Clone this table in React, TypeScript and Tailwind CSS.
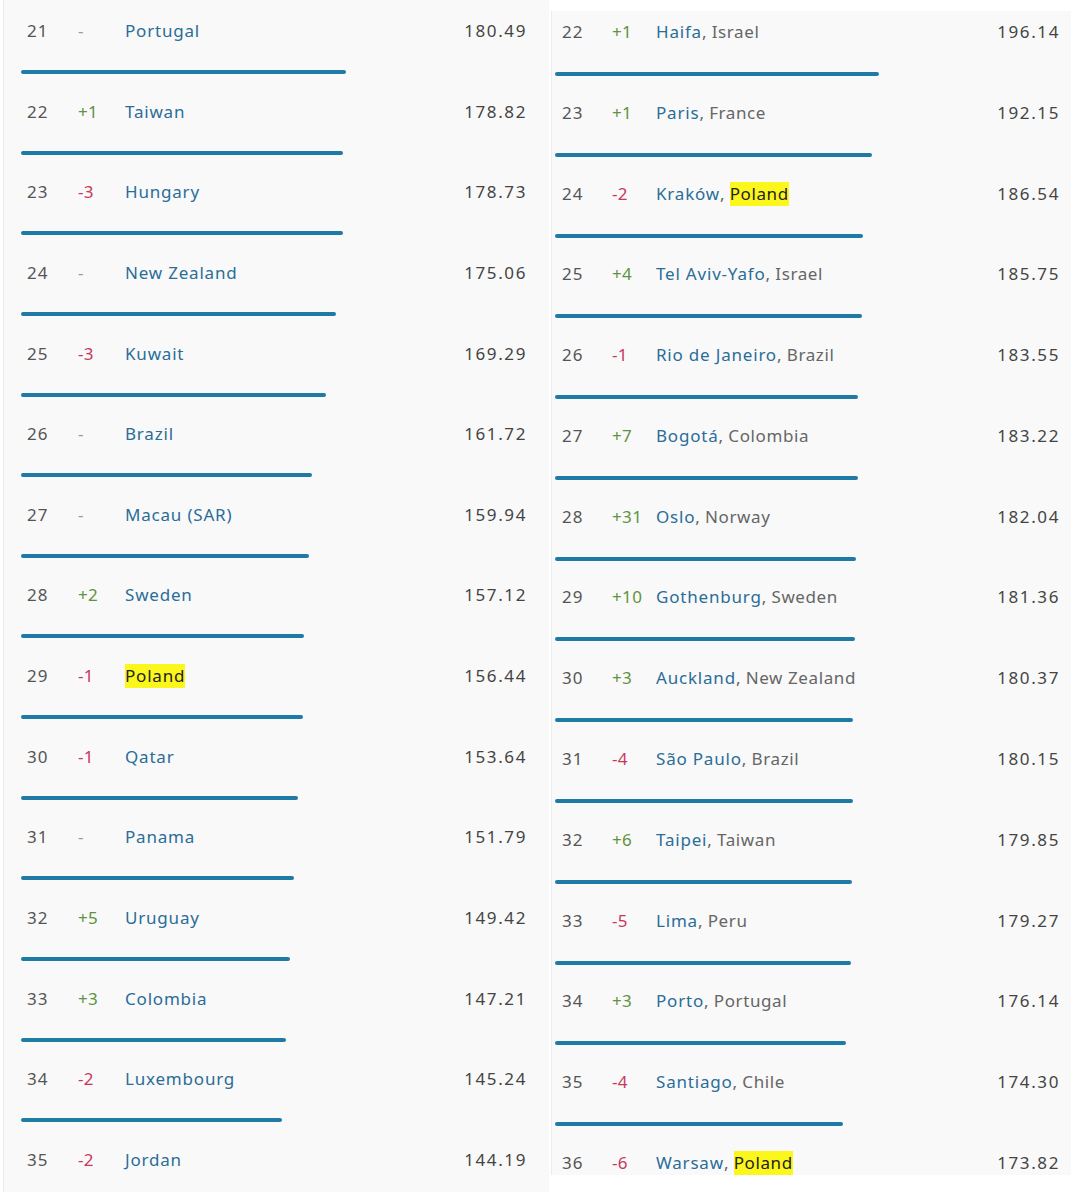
import React from "react";

type Row = { rank: number; change: string; name: string; country?: string; value: string; hl?: boolean; hlName?: boolean };

const left: Row[] = [
  { rank: 21, change: "-", name: "Portugal", value: "180.49" },
  { rank: 22, change: "+1", name: "Taiwan", value: "178.82" },
  { rank: 23, change: "-3", name: "Hungary", value: "178.73" },
  { rank: 24, change: "-", name: "New Zealand", value: "175.06" },
  { rank: 25, change: "-3", name: "Kuwait", value: "169.29" },
  { rank: 26, change: "-", name: "Brazil", value: "161.72" },
  { rank: 27, change: "-", name: "Macau (SAR)", value: "159.94" },
  { rank: 28, change: "+2", name: "Sweden", value: "157.12" },
  { rank: 29, change: "-1", name: "Poland", value: "156.44", hlName: true },
  { rank: 30, change: "-1", name: "Qatar", value: "153.64" },
  { rank: 31, change: "-", name: "Panama", value: "151.79" },
  { rank: 32, change: "+5", name: "Uruguay", value: "149.42" },
  { rank: 33, change: "+3", name: "Colombia", value: "147.21" },
  { rank: 34, change: "-2", name: "Luxembourg", value: "145.24" },
  { rank: 35, change: "-2", name: "Jordan", value: "144.19" },
];

const right: Row[] = [
  { rank: 22, change: "+1", name: "Haifa", country: "Israel", value: "196.14" },
  { rank: 23, change: "+1", name: "Paris", country: "France", value: "192.15" },
  { rank: 24, change: "-2", name: "Kraków", country: "Poland", value: "186.54", hl: true },
  { rank: 25, change: "+4", name: "Tel Aviv-Yafo", country: "Israel", value: "185.75" },
  { rank: 26, change: "-1", name: "Rio de Janeiro", country: "Brazil", value: "183.55" },
  { rank: 27, change: "+7", name: "Bogotá", country: "Colombia", value: "183.22" },
  { rank: 28, change: "+31", name: "Oslo", country: "Norway", value: "182.04" },
  { rank: 29, change: "+10", name: "Gothenburg", country: "Sweden", value: "181.36" },
  { rank: 30, change: "+3", name: "Auckland", country: "New Zealand", value: "180.37" },
  { rank: 31, change: "-4", name: "São Paulo", country: "Brazil", value: "180.15" },
  { rank: 32, change: "+6", name: "Taipei", country: "Taiwan", value: "179.85" },
  { rank: 33, change: "-5", name: "Lima", country: "Peru", value: "179.27" },
  { rank: 34, change: "+3", name: "Porto", country: "Portugal", value: "176.14" },
  { rank: 35, change: "-4", name: "Santiago", country: "Chile", value: "174.30" },
  { rank: 36, change: "-6", name: "Warsaw", country: "Poland", value: "173.82", hl: true },
];

function changeClass(c: string) {
  if (c.startsWith("+")) return "text-[#5e9440]";
  if (c === "-") return "text-[#9a9a9a]";
  return "text-[#c8385c]";
}

const font = { fontFamily: "'Noto Sans', 'Open Sans', sans-serif" };

function LeftRow({ r }: { r: Row }) {
  const w = parseFloat(r.value) * 1.8;
  return (
    <div className="flex h-[80.64px] flex-col pt-[19px]">
      <div className="flex h-[24px] items-center pr-[22px] text-[17px] leading-[24px] tracking-[0.4px]">
        <span className="w-[74px] shrink-0 pl-[23px] tracking-[1px] text-[#555]">{r.rank}</span>
        <span className={"w-[47px] shrink-0 " + changeClass(r.change)}>{r.change}</span>
        {r.hlName ? (
          <span className="bg-[#fbf71c] tracking-[0.8px] text-[#222]">{r.name}</span>
        ) : (
          <span className="tracking-[0.8px] text-[#2a6d98] [font-weight:450]">{r.name}</span>
        )}
        <span className="ml-auto tracking-[1.6px] text-[#444]">{r.value}</span>
      </div>
      <div className="ml-[17px] mt-[27px] h-[4px] rounded-full bg-[#1f7aa5]" style={{ width: w }} />
    </div>
  );
}

function RightRow({ r }: { r: Row }) {
  const w = parseFloat(r.value) * 1.652;
  return (
    <div className="flex h-[80.79px] shrink-0 flex-col pt-[9px]">
      <div className="flex h-[24px] items-center pr-[11px] text-[17px] leading-[24px] tracking-[0.4px]">
        <span className="w-[60px] shrink-0 pl-[10px] tracking-[1px] text-[#555]">{r.rank}</span>
        <span className={"w-[44px] shrink-0 " + changeClass(r.change)}>{r.change}</span>
        <span className="tracking-[0.8px] text-[#2a6d98] [font-weight:450]">{r.name}</span>
        <span className="text-[#666]">,&nbsp;</span>
        {r.hl ? (
          <span className="bg-[#fbf71c] tracking-[0.6px] text-[#222]">{r.country}</span>
        ) : (
          <span className="tracking-[0.6px] text-[#666]">{r.country}</span>
        )}
        <span className="ml-auto tracking-[1.6px] text-[#444]">{r.value}</span>
      </div>
      <div className="ml-[3px] mt-[28px] h-[4px] rounded-full bg-[#1f7aa5]" style={{ width: w }} />
    </div>
  );
}

export default function App() {
  return (
    <div className="flex h-[1192px] w-[1074px] overflow-hidden bg-white" style={font}>
      <div className="ml-[3px] h-[1192px] w-[546px] shrink-0 border-l border-[#ececec] bg-[#f9f9f9]">
        {left.map((r) => (
          <LeftRow key={r.rank} r={r} />
        ))}
      </div>
      <div className="ml-[2px] mt-[11px] flex h-[1164px] w-[520px] shrink-0 flex-col overflow-hidden border-l border-[#ececec] bg-[#f9f9f9]">
        {right.map((r) => (
          <RightRow key={r.rank} r={r} />
        ))}
      </div>
    </div>
  );
}
